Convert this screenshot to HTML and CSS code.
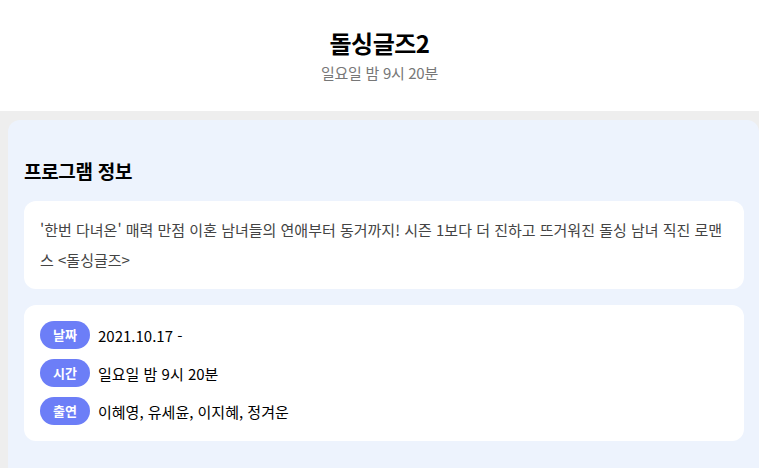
FILE: index.html
```html
<!DOCTYPE html>
<html lang="ko">
<head>
    <meta charset="UTF-8">
    <meta name="viewport" content="width=device-width, initial-scale=1.0">
    <title>돌싱글즈2</title>
    <link rel="stylesheet" href="styles.css">
</head>
<body>
    <div class="top-bar"></div>

    <header class="program-header">
        <h1 class="program-title">돌싱글즈2</h1>
        <p class="program-time">일요일 밤 9시 20분</p>
    </header>

    <main class="content">
        <section class="info-panel">
            <h2 class="info-title">프로그램 정보</h2>

            <div class="info-card">
                <p class="description">'한번 다녀온' 매력 만점 이혼 남녀들의 연애부터 동거까지! 시즌 1보다 더 진하고 뜨거워진 돌싱 남녀 직진 로맨스 &lt;돌싱글즈&gt;</p>
            </div>

            <div class="info-card detail-card">
                <div class="detail-row">
                    <span class="badge">날짜</span>
                    <span class="detail-text">2021.10.17 -</span>
                </div>
                <div class="detail-row">
                    <span class="badge">시간</span>
                    <span class="detail-text">일요일 밤 9시 20분</span>
                </div>
                <div class="detail-row">
                    <span class="badge">출연</span>
                    <span class="detail-text">이혜영, 유세윤, 이지혜, 정겨운</span>
                </div>
            </div>
        </section>
    </main>
</body>
</html>
```

FILE: styles.css
```css
body {
    font-family: "Noto Sans CJK KR", "Noto Sans", sans-serif;
    margin: 0;
    background-color: #eeeeee;
    color: #000000;
}
.top-bar {
    height: 0;
    margin: 0 20px;
    box-shadow: 0 1px 6px rgba(0, 0, 0, 0.12);
}
.program-header {
    background-color: #ffffff;
    height: 111px;
    box-sizing: border-box;
    padding-top: 26px;
    text-align: center;
}
.program-title {
    margin: 0;
    font-size: 24px;
    font-weight: 700;
    line-height: 34px;
    letter-spacing: -0.5px;
}
.program-time {
    margin: 0;
    font-size: 15px;
    line-height: 26px;
    color: #777777;
    letter-spacing: -0.3px;
}
.content {
    padding: 9px 0 0 8px;
}
.info-panel {
    background-color: #edf3fd;
    border-radius: 12px 12px 0 0;
    padding: 37px 15px 40px 16px;
    display: flex;
    flex-direction: column;
    gap: 16px;
}
.info-title {
    margin: 0;
    font-size: 19px;
    font-weight: 700;
    line-height: 28px;
    letter-spacing: -0.3px;
}
.info-card {
    background-color: #ffffff;
    border-radius: 12px;
    padding: 14px 16px;
}
.description {
    margin: 0;
    font-size: 15px;
    line-height: 30px;
    color: #444444;
}
.detail-card {
    padding: 16px;
    display: flex;
    flex-direction: column;
    gap: 10px;
}
.detail-row {
    display: flex;
    align-items: center;
    gap: 8px;
}
.badge {
    background-color: #6c7ef7;
    color: #ffffff;
    font-size: 13px;
    font-weight: 700;
    width: 50px;
    height: 28px;
    line-height: 28px;
    text-align: center;
    border-radius: 14px;
}
.detail-text {
    font-size: 15px;
}
```
